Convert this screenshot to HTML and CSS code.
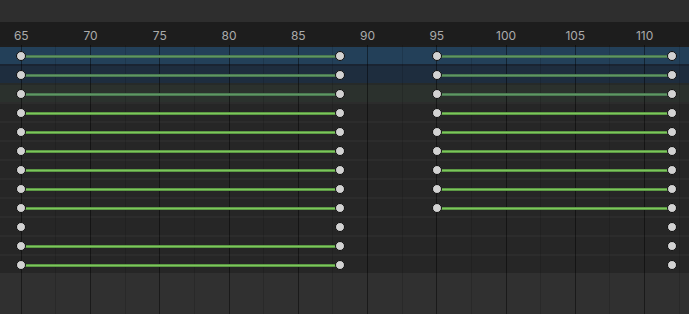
FILE: index.html
```html
<!DOCTYPE html>
<html>
<head>
<meta charset="utf-8">
<link rel="stylesheet" href="styles.css">
</head>
<body>
<div class="editor">
  <div class="topbar"></div>
  <div class="ruler">
    <span class="label" style="--f:0">65</span>
    <span class="label" style="--f:5">70</span>
    <span class="label" style="--f:10">75</span>
    <span class="label" style="--f:15">80</span>
    <span class="label" style="--f:20">85</span>
    <span class="label" style="--f:25">90</span>
    <span class="label" style="--f:30">95</span>
    <span class="label" style="--f:35">100</span>
    <span class="label" style="--f:40">105</span>
    <span class="label" style="--f:45">110</span>
  </div>
  <div class="track">
    <div class="grid">
      <i class="major" style="--f:0"></i><i class="major" style="--f:5"></i><i class="major" style="--f:10"></i><i class="major" style="--f:15"></i><i class="major" style="--f:20"></i><i class="major" style="--f:25"></i><i class="major" style="--f:30"></i><i class="major" style="--f:35"></i><i class="major" style="--f:40"></i><i class="major" style="--f:45"></i>
      <i class="minor" style="--f:2.5"></i><i class="minor" style="--f:7.5"></i><i class="minor" style="--f:12.5"></i><i class="minor" style="--f:17.5"></i><i class="minor" style="--f:22.5"></i><i class="minor" style="--f:27.5"></i><i class="minor" style="--f:32.5"></i><i class="minor" style="--f:37.5"></i><i class="minor" style="--f:42.5"></i><i class="minor" style="--f:47.5"></i>
    </div>
    <div class="rows">
      <div class="row sel1">
        <b class="seg muted" style="--a:0;--b:23"></b><b class="seg muted" style="--a:30;--b:47"></b>
        <b class="key" style="--f:0"></b><b class="key" style="--f:23"></b><b class="key" style="--f:30"></b><b class="key" style="--f:47"></b>
      </div>
      <div class="row sel2">
        <b class="seg muted" style="--a:0;--b:23"></b><b class="seg muted" style="--a:30;--b:47"></b>
        <b class="key" style="--f:0"></b><b class="key" style="--f:23"></b><b class="key" style="--f:30"></b><b class="key" style="--f:47"></b>
      </div>
      <div class="row sel3">
        <b class="seg muted" style="--a:0;--b:23"></b><b class="seg muted" style="--a:30;--b:47"></b>
        <b class="key" style="--f:0"></b><b class="key" style="--f:23"></b><b class="key" style="--f:30"></b><b class="key" style="--f:47"></b>
      </div>
      <div class="row">
        <b class="seg" style="--a:0;--b:23"></b><b class="seg" style="--a:30;--b:47"></b>
        <b class="key" style="--f:0"></b><b class="key" style="--f:23"></b><b class="key" style="--f:30"></b><b class="key" style="--f:47"></b>
      </div>
      <div class="row">
        <b class="seg" style="--a:0;--b:23"></b><b class="seg" style="--a:30;--b:47"></b>
        <b class="key" style="--f:0"></b><b class="key" style="--f:23"></b><b class="key" style="--f:30"></b><b class="key" style="--f:47"></b>
      </div>
      <div class="row">
        <b class="seg" style="--a:0;--b:23"></b><b class="seg" style="--a:30;--b:47"></b>
        <b class="key" style="--f:0"></b><b class="key" style="--f:23"></b><b class="key" style="--f:30"></b><b class="key" style="--f:47"></b>
      </div>
      <div class="row">
        <b class="seg" style="--a:0;--b:23"></b><b class="seg" style="--a:30;--b:47"></b>
        <b class="key" style="--f:0"></b><b class="key" style="--f:23"></b><b class="key" style="--f:30"></b><b class="key" style="--f:47"></b>
      </div>
      <div class="row">
        <b class="seg" style="--a:0;--b:23"></b><b class="seg" style="--a:30;--b:47"></b>
        <b class="key" style="--f:0"></b><b class="key" style="--f:23"></b><b class="key" style="--f:30"></b><b class="key" style="--f:47"></b>
      </div>
      <div class="row">
        <b class="seg" style="--a:0;--b:23"></b><b class="seg" style="--a:30;--b:47"></b>
        <b class="key" style="--f:0"></b><b class="key" style="--f:23"></b><b class="key" style="--f:30"></b><b class="key" style="--f:47"></b>
      </div>
      <div class="row">
        <b class="key" style="--f:0"></b><b class="key" style="--f:23"></b><b class="key" style="--f:47"></b>
      </div>
      <div class="row">
        <b class="seg" style="--a:0;--b:23"></b>
        <b class="key" style="--f:0"></b><b class="key" style="--f:23"></b><b class="key" style="--f:47"></b>
      </div>
      <div class="row">
        <b class="seg" style="--a:0;--b:23"></b>
        <b class="key" style="--f:0"></b><b class="key" style="--f:23"></b><b class="key" style="--f:47"></b>
      </div>
    </div>
    <div class="empty"></div>
  </div>
</div>
</body>
</html>
```

FILE: styles.css
```css
html, body {
  margin: 0;
  padding: 0;
  background: #303030;
}
.editor {
  --x0: 21.3px;
  --fw: 13.85px;
  width: 689px;
  height: 314px;
  overflow: hidden;
  display: flex;
  flex-direction: column;
  font-family: Inter, "DejaVu Sans", sans-serif;
}
.topbar {
  height: 22px;
  background: #2e2e2e;
  flex: none;
}
.ruler {
  height: 23px;
  background: #1d1d1d;
  position: relative;
  flex: none;
}
.label {
  position: absolute;
  top: 6px;
  left: calc(var(--x0) + var(--f) * var(--fw));
  transform: translateX(-50%);
  font-size: 12px;
  line-height: 16px;
  color: #ababab;
}
.track {
  position: relative;
  flex: 1;
  display: flex;
  flex-direction: column;
}
.grid {
  position: absolute;
  inset: 0;
  z-index: 1;
  pointer-events: none;
}
.grid i {
  position: absolute;
  top: 0;
  bottom: 0;
  width: 1px;
  left: calc(var(--x0) + var(--f) * var(--fw) - 0.5px);
}
.grid .major { background: rgba(0, 0, 0, 0.45); }
.grid .minor { background: rgba(0, 0, 0, 0.13); }
.rows {
  flex: none;
}
.row {
  position: relative;
  height: 17px;
  border-top: 2px solid #2c2c2c;
  background: #262626;
}
.row.sel1 { background: #234059; border-top-color: #1e1e1e; }
.row.sel2 { background: #1e2d3e; border-top-color: #1a2432; }
.row.sel3 { background: #2b312d; border-top-color: #262a29; }
.empty {
  flex: 1;
  background: #303030;
}
.key {
  position: absolute;
  z-index: 3;
  top: 4px;
  width: 8px;
  height: 8px;
  border: 1px solid #0e0e0e;
  border-radius: 50%;
  background: #d2d2d2;
  left: calc(var(--x0) + var(--f) * var(--fw) - 5px);
}
.seg {
  position: absolute;
  z-index: 2;
  top: 7.5px;
  height: 3px;
  left: calc(var(--x0) + var(--a) * var(--fw));
  width: calc((var(--b) - var(--a)) * var(--fw));
  background: linear-gradient(#3f6f30, #7cc65b 35%, #7cc65b 65%, #3f6f30);
}
.seg.muted {
  background: linear-gradient(#3a5e44, #5e9762 35%, #5e9762 65%, #3a5e44);
}
```
